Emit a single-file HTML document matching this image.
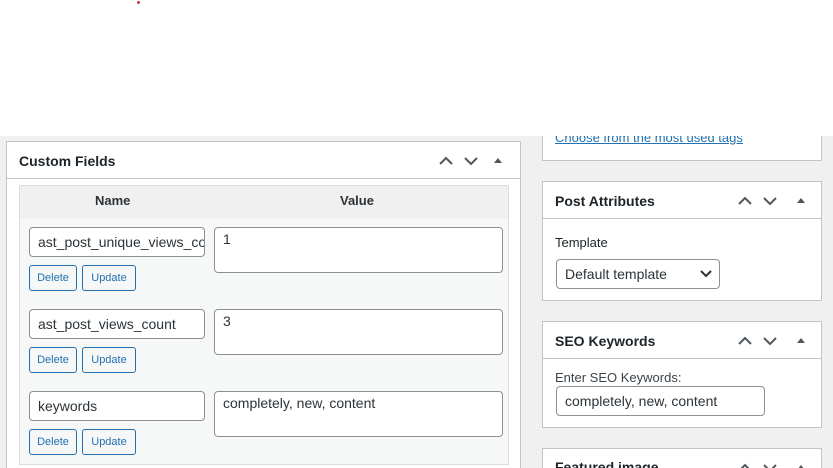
<!DOCTYPE html>
<html style="overflow:hidden;width:833px;height:468px"><head><style>
*{box-sizing:border-box;margin:0;padding:0}
body{width:833px;height:468px;overflow:hidden;background:#f0f0f1;font-family:"Liberation Sans",sans-serif;color:#1d2327;position:relative}
.a{position:absolute}
.box{position:absolute;background:#fff;border:1px solid #c3c4c7}
.h{position:absolute;left:0;right:0;top:0;border-bottom:1px solid #c3c4c7}
.h b{position:absolute;left:12px;font-size:14px;font-weight:600}
.in{position:absolute;background:#fff;border:1px solid #8c8f94;border-radius:4px;font-size:14px;padding-left:8px;color:#2c3338;white-space:nowrap;overflow:hidden}
.btn{position:absolute;border:1px solid #2271b1;border-radius:3px;color:#2271b1;font-size:11px;text-align:center;line-height:24px;background:#f6f7f7}
.ta{position:absolute;background:#fff;border:1px solid #8c8f94;border-radius:4px;font-size:14px;padding:3px 8px;color:#2c3338}
.ic{position:absolute;width:70px;height:14px}
</style></head><body>
<div class="a" style="left:0;top:0;width:833px;height:136px;background:#fff"></div>
<div class="a" style="left:137px;top:1px;width:3px;height:3px;border-radius:50%;background:#d63638"></div>

<div class="box" style="left:6px;top:141px;width:515px;height:340px">
 <div class="h" style="height:37px"><b style="top:11px">Custom Fields</b></div>
</div>
<svg class="ic" style="left:436px;top:153px" viewBox="0 0 70 14"><path d="M4 11l6-6 6 6M29 5l6 6 6-6" fill="none" stroke="#50575e" stroke-width="2"/><path d="M58 10h8l-4-5z" fill="#50575e"/></svg>
<div class="a" style="left:19px;top:185px;width:490px;height:280px;background:#f6f7f7;border:1px solid #dcdcde"></div>
<div class="a" style="left:20px;top:186px;width:488px;height:32px;background:#f0f0f1"></div>
<div class="a" style="left:95px;top:193px;font-size:13px;font-weight:bold;color:#2c3338">Name</div>
<div class="a" style="left:340px;top:193px;font-size:13px;font-weight:bold;color:#2c3338">Value</div>

<div class="in" style="left:29px;top:227px;width:176px;height:30px;line-height:28px">ast_post_unique_views_co</div>
<div class="ta" style="left:214px;top:227px;width:289px;height:46px">1</div>
<div class="btn" style="left:29px;top:265px;width:48px;height:26px">Delete</div>
<div class="btn" style="left:82px;top:265px;width:54px;height:26px">Update</div>

<div class="in" style="left:29px;top:309px;width:176px;height:30px;line-height:28px">ast_post_views_count</div>
<div class="ta" style="left:214px;top:309px;width:289px;height:46px">3</div>
<div class="btn" style="left:29px;top:347px;width:48px;height:26px">Delete</div>
<div class="btn" style="left:82px;top:347px;width:54px;height:26px">Update</div>

<div class="in" style="left:29px;top:391px;width:176px;height:30px;line-height:28px">keywords</div>
<div class="ta" style="left:214px;top:391px;width:289px;height:46px">completely, new, content</div>
<div class="btn" style="left:29px;top:429px;width:48px;height:26px">Delete</div>
<div class="btn" style="left:82px;top:429px;width:54px;height:26px">Update</div>

<div class="box" style="left:542px;top:120px;width:280px;height:41px;border-top:none"></div>
<div class="a" style="left:555px;top:130px;font-size:13px;color:#2271b1;text-decoration:underline">Choose from the most used tags</div>
<div class="a" style="left:520px;top:120px;width:313px;height:16px;background:#fff"></div>

<div class="box" style="left:542px;top:181px;width:280px;height:120px">
 <div class="h" style="height:37px"><b style="top:11px">Post Attributes</b></div>
 <div class="a" style="left:12px;top:53px;font-size:13px">Template</div>
 <div class="in" style="left:13px;top:77px;width:164px;height:30px;line-height:28px">Default template
  <svg class="a" style="left:143px;top:10px" width="12" height="8" viewBox="0 0 12 8"><path d="M1 1l5 5 5-5" fill="none" stroke="#2c3338" stroke-width="2"/></svg></div>
</div>
<svg class="ic" style="left:737px;top:193px" viewBox="0 0 70 14"><path d="M2 11l6-6 6 6M27 5l6 6 6-6" fill="none" stroke="#50575e" stroke-width="2"/><path d="M60 10h8l-4-5z" fill="#50575e"/></svg>

<div class="box" style="left:542px;top:321px;width:280px;height:107px">
 <div class="h" style="height:37px"><b style="top:11px">SEO Keywords</b></div>
 <div class="a" style="left:12px;top:48px;font-size:13px;color:#3c434a">Enter SEO Keywords:</div>
 <div class="in" style="left:13px;top:64px;width:209px;height:30px;line-height:28px">completely, new, content</div>
</div>
<svg class="ic" style="left:737px;top:333px" viewBox="0 0 70 14"><path d="M2 11l6-6 6 6M27 5l6 6 6-6" fill="none" stroke="#50575e" stroke-width="2"/><path d="M60 10h8l-4-5z" fill="#50575e"/></svg>

<div class="box" style="left:542px;top:448px;width:280px;height:20px;border-bottom:none">
 <b class="a" style="left:12px;top:10px;font-size:14px;font-weight:600">Featured image</b>
</div>
<svg class="ic" style="left:737px;top:460px" viewBox="0 0 70 14"><path d="M2 11l6-6 6 6M27 5l6 6 6-6" fill="none" stroke="#50575e" stroke-width="2"/><path d="M60 10h8l-4-5z" fill="#50575e"/></svg>
</body></html>
